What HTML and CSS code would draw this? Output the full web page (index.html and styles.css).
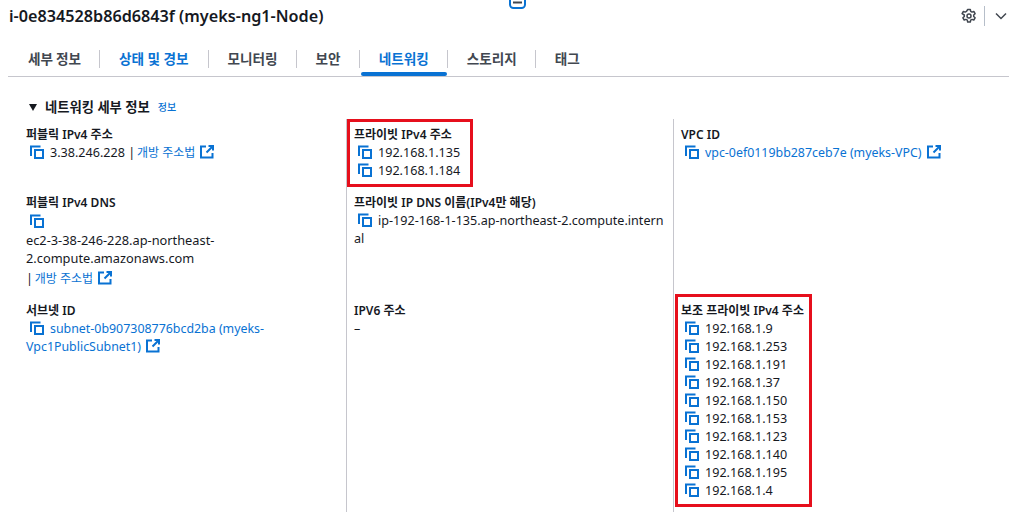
FILE: index.html
```html
<!DOCTYPE html>
<html lang="ko">
<head>
<meta charset="utf-8">
<title>네트워킹</title>
<link rel="stylesheet" href="styles.css">
</head>
<body>
<svg class="defs" width="0" height="0" aria-hidden="true">
  <symbol id="copy" viewBox="0 0 14 14"><path d="M1 11V1.500h9.500" fill="none" stroke="currentColor" stroke-width="2"/><rect x="5" y="5" width="8" height="8" fill="none" stroke="currentColor" stroke-width="2"/></symbol>
  <symbol id="ext" viewBox="0 0 14 14"><path d="M6 1.500H1v11h11.500V8" fill="none" stroke="currentColor" stroke-width="2"/><path d="M8.500 1H13v4.500M13 1L6.500 7.500" fill="none" stroke="currentColor" stroke-width="2"/></symbol>
</svg>
<svg class="clip-icon" width="18" height="10" viewBox="0 0 18 10"><rect x="1" y="-7" width="15" height="15" rx="3.500" fill="none" stroke="#0972d3" stroke-width="2"/><path d="M4 2.500h9" stroke="#414750" stroke-width="2"/></svg>
<header class="head">
  <h1 class="title">i-0e834528b86d6843f (myeks-ng1-Node)</h1>
  <div class="head-actions">
    <svg class="gear" width="16" height="16" viewBox="0 0 16 16"><path d="M6.700 1.500h2.600l.4 1.900 1.300.7 1.800-.6 1.300 2.200-1.400 1.300v1.500l1.400 1.300-1.300 2.200-1.800-.6-1.300.7-.4 1.900H6.700l-.4-1.900-1.300-.7-1.800.6-1.300-2.200 1.400-1.300V7L1.100 5.700l1.300-2.200 1.800.6 1.300-.7z" fill="none" stroke="#414750" stroke-width="1.500" stroke-linejoin="round"/><circle cx="8" cy="8" r="2" fill="none" stroke="#414750" stroke-width="1.500"/></svg>
    <span class="vsep"></span>
    <svg class="chev" width="12" height="8" viewBox="0 0 12 8"><path d="M1 1.500l5 5 5-5" fill="none" stroke="#414750" stroke-width="1.500"/></svg>
  </div>
</header>
<nav class="tabs">
  <span class="tab tab-first">세부 정보</span>
  <span class="tab tab-link">상태 및 경보</span>
  <span class="tab">모니터링</span>
  <span class="tab">보안</span>
  <span class="tab tab-active">네트워킹</span>
  <span class="tab">스토리지</span>
  <span class="tab tab-last">태그</span>
</nav>
<section class="section">
  <h2 class="section-title"><span class="caret"></span>네트워킹 세부 정보<a class="info">정보</a></h2>
  <div class="grid">
    <div class="col col-first">
      <div class="item item-a">
        <div class="label">퍼블릭 IPv4 주소</div>
        <div class="value"><svg class="ico-copy"><use href="#copy"/></svg>3.38.246.228 | <a class="link ko">개방 주소법<svg class="ico-ext"><use href="#ext"/></svg></a></div>
      </div>
      <div class="item item-b">
        <div class="label">퍼블릭 IPv4 DNS</div>
        <div class="value icon-row"><svg class="ico-copy"><use href="#copy"/></svg></div>
        <div class="value long">ec2-3-38-246-228.ap-northeast-<br>2.compute.amazonaws.com</div>
        <div class="value after-long">| <a class="link ko">개방 주소법<svg class="ico-ext"><use href="#ext"/></svg></a></div>
      </div>
      <div class="item">
        <div class="label">서브넷 ID</div>
        <div class="value"><svg class="ico-copy"><use href="#copy"/></svg><a class="link">subnet-0b907308776bcd2ba (myeks-<br>Vpc1PublicSubnet1)<svg class="ico-ext"><use href="#ext"/></svg></a></div>
      </div>
    </div>
    <div class="col">
      <div class="item item-a">
        <div class="label">프라이빗 IPv4 주소</div>
        <div class="value"><svg class="ico-copy"><use href="#copy"/></svg>192.168.1.135</div>
        <div class="value"><svg class="ico-copy"><use href="#copy"/></svg>192.168.1.184</div>
        <span class="mark mark-private"></span>
      </div>
      <div class="item item-b">
        <div class="label">프라이빗 IP DNS 이름(IPv4만 해당)</div>
        <div class="value"><svg class="ico-copy"><use href="#copy"/></svg>ip-192-168-1-135.ap-northeast-2.compute.intern<br>al</div>
      </div>
      <div class="item">
        <div class="label">IPV6 주소</div>
        <div class="value">–</div>
      </div>
    </div>
    <div class="col">
      <div class="item item-a">
        <div class="label">VPC ID</div>
        <div class="value"><svg class="ico-copy"><use href="#copy"/></svg><a class="link">vpc-0ef0119bb287ceb7e (myeks-VPC)<svg class="ico-ext"><use href="#ext"/></svg></a></div>
      </div>
      <div class="item item-b"></div>
      <div class="item">
        <div class="label">보조 프라이빗 IPv4 주소</div>
        <div class="value"><svg class="ico-copy"><use href="#copy"/></svg>192.168.1.9</div>
        <div class="value"><svg class="ico-copy"><use href="#copy"/></svg>192.168.1.253</div>
        <div class="value"><svg class="ico-copy"><use href="#copy"/></svg>192.168.1.191</div>
        <div class="value"><svg class="ico-copy"><use href="#copy"/></svg>192.168.1.37</div>
        <div class="value"><svg class="ico-copy"><use href="#copy"/></svg>192.168.1.150</div>
        <div class="value"><svg class="ico-copy"><use href="#copy"/></svg>192.168.1.153</div>
        <div class="value"><svg class="ico-copy"><use href="#copy"/></svg>192.168.1.123</div>
        <div class="value"><svg class="ico-copy"><use href="#copy"/></svg>192.168.1.140</div>
        <div class="value"><svg class="ico-copy"><use href="#copy"/></svg>192.168.1.195</div>
        <div class="value"><svg class="ico-copy"><use href="#copy"/></svg>192.168.1.4</div>
        <span class="mark mark-secondary"></span>
      </div>
    </div>
  </div>
</section>
</body>
</html>
```
FILE: styles.css
```css
* { box-sizing: border-box; }
html, body { height: 100%; overflow: hidden; }
body {
  margin: 0;
  background: #fff;
  color: #16191f;
  font: 12px/18px "Noto Sans", "Noto Sans CJK KR", sans-serif;
  position: relative;
}
.defs { position: absolute; }
.clip-icon { position: absolute; left: 509px; top: 0; }
.head {
  height: 32px;
  padding: 0 0 0 9px;
  display: flex;
  align-items: center;
  justify-content: space-between;
}
.title { margin: 0; font-size: 16.2px; line-height: 32px; font-weight: 600; }
.head-actions { display: flex; align-items: center; }
.gear { margin-right: 7px; }
.vsep { width: 1px; height: 20px; background: #b6bec9; margin-right: 10px; }
.chev { margin-right: 2px; }
.tabs {
  height: 45px;
  margin-left: 8px;
  padding: 18px 0 0 2px;
  display: flex;
  align-items: flex-start;
  border-bottom: 1px solid #c6c6cd;
}
.tab {
  position: relative;
  height: 18px;
  padding: 0 18px 0 19px;
  font-size: 13.6px;
  line-height: 18px;
  font-weight: 600;
  color: #414750;
  border-right: 1px solid #c6c6cd;
  word-spacing: -0.6px;
}
.tab-first { padding-left: 18px; }
.tab-link { color: #0972d3; word-spacing: 0; padding-right: 19px; }
.tab-active { color: #0972d3; }
.tab-active::after {
  content: "";
  position: absolute;
  left: 1px;
  right: 0;
  top: 22px;
  height: 4px;
  border-radius: 2px;
  background: #0972d3;
}
.tab-last { border-right: 0; }
.section { padding: 21px 0 0 29px; }
.section-title {
  margin: 0;
  height: 18px;
  display: flex;
  align-items: center;
  font-size: 13.3px;
  line-height: 18px;
  font-weight: 600;
}
.caret {
  width: 0;
  height: 0;
  margin-right: 8px;
  border-left: 4.500px solid transparent;
  border-right: 4.500px solid transparent;
  border-top: 7px solid #16191f;
}
.info { margin-left: 8px; font-size: 10px; color: #0972d3; font-weight: 500; }
.grid {
  margin: 3px 0 0 -3px;
  display: grid;
  grid-template-columns: 320px 327px 330px;
  height: 400px;
}
.col { padding: 7px 7px 0 7px; border-left: 1px solid #c6c6cd; }
.col-first { padding-left: 0; border-left: 0; }
.item { position: relative; }
.item-a { height: 68px; }
.item-b { height: 108px; }
.label { font-weight: 600; white-space: nowrap; }
.value { white-space: nowrap; font-size: 12.6px; }
.icon-row { height: 18px; }
.icon-row .ico-copy { vertical-align: -3px; }
.long { font-size: 12.8px; margin-top: 1px; }
.after-long { margin-top: 3px; }
.link { color: #0972d3; font-size: 12.4px; }
.ko { font-size: 12px; margin-left: -1.500px; }
.ico-copy {
  width: 14px;
  height: 14px;
  margin: 0 6px 0 4px;
  vertical-align: -2px;
  color: #0972d3;
}
.ico-ext {
  width: 14px;
  height: 14px;
  margin-left: 5px;
  vertical-align: -2px;
  color: #0972d3;
}
.mark { position: absolute; border: 3px solid #e60f1c; }
.mark-private { left: -7px; top: -7px; width: 126px; height: 68px; }
.mark-secondary { left: -6px; top: -8px; width: 137px; height: 213px; }
```
